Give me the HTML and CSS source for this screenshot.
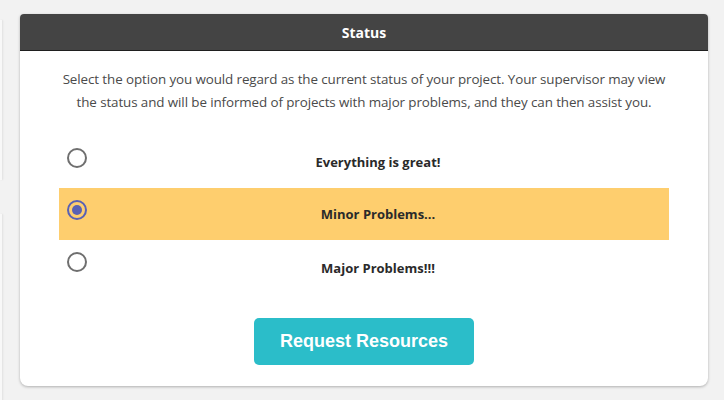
FILE: index.html
```html
<!DOCTYPE html>
<html>
<head>
<meta charset="utf-8">
<link rel="stylesheet" href="styles.css">
</head>
<body>
<div class="page">
  <div class="side">
    <div class="side-card top"></div>
    <div class="side-card bottom"></div>
  </div>
  <div class="card">
    <div class="card-header">Status</div>
    <div class="card-body">
      <p class="desc">Select the option you would regard as the current status of your project. Your supervisor may view the status and will be informed of projects with major problems, and they can then assist you.</p>
      <div class="options">
        <label class="option first">
          <span class="radio"></span>
          <span class="label">Everything is great!</span>
        </label>
        <label class="option selected">
          <span class="radio checked"></span>
          <span class="label">Minor Problems...</span>
        </label>
        <label class="option last">
          <span class="radio"></span>
          <span class="label">Major Problems!!!</span>
        </label>
      </div>
      <div class="actions">
        <button class="btn">Request Resources</button>
      </div>
    </div>
  </div>
</div>
</body>
</html>
```
FILE: styles.css
```css
html, body {
  margin: 0;
  padding: 0;
  background: #f2f2f2;
  width: 724px;
  height: 400px;
  overflow: hidden;
}
.page {
  display: flex;
  gap: 18px;
  padding-top: 14px;
}
.side {
  width: 2px;
  display: flex;
  flex-direction: column;
  gap: 34px;
  margin-top: 6px;
}
.side-card {
  background: #f8f8f8;
  box-shadow: 1px 0 2px rgba(0,0,0,0.08);
}
.side-card.top { height: 160px; }
.side-card.bottom { height: 200px; }
.card {
  width: 688px;
  height: 372px;
  background: #fff;
  border-radius: 4px 4px 8px 8px;
  box-shadow: 0 1px 3px rgba(0,0,0,0.28);
  display: flex;
  flex-direction: column;
}
.card-header {
  height: 36px;
  background: #444444;
  border-bottom: 1px solid #1f1f1f;
  border-radius: 4px 4px 0 0;
  color: #fff;
  font-family: "Open Sans", "Noto Sans", sans-serif;
  font-weight: 700;
  font-size: 14px;
  display: flex;
  align-items: center;
  justify-content: center;
}
.card-body {
  padding: 17px 39px 0 39px;
  display: flex;
  flex-direction: column;
}
.desc {
  margin: 0;
  font-family: "Open Sans", "Noto Sans", sans-serif;
  font-size: 13.4px;
  line-height: 23px;
  color: #4a4a4a;
  text-align: center;
  letter-spacing: -0.1px;
}
.options {
  margin-top: 22px;
  display: flex;
  flex-direction: column;
}
.option {
  height: 52px;
  display: flex;
  align-items: center;
  padding-left: 8px;
}
.option.selected {
  background: #fece6e;
}
.radio {
  width: 16px;
  height: 16px;
  border: 2px solid #6f6f6f;
  border-radius: 50%;
  box-sizing: content-box;
  flex: none;
  margin-top: -8px;
  position: relative;
}
.radio.checked {
  border-color: #5961b4;
}
.radio.checked::after {
  content: "";
  position: absolute;
  left: 3px;
  top: 3px;
  width: 10px;
  height: 10px;
  border-radius: 50%;
  background: #5961b4;
}
.label {
  flex: 1;
  text-align: center;
  font-family: "Open Sans", "Noto Sans", sans-serif;
  font-weight: 700;
  font-size: 13px;
  color: #2a2a2a;
}
.option.last .label { margin-top: 4px; }
.actions {
  display: flex;
  justify-content: center;
  margin-top: 26px;
}
.btn {
  width: 220px;
  height: 47px;
  border: none;
  border-radius: 5px;
  background: #2bbdc9;
  color: #fff;
  font-family: "Liberation Sans", Arial, sans-serif;
  font-weight: 700;
  font-size: 18px;
  cursor: pointer;
}
```
